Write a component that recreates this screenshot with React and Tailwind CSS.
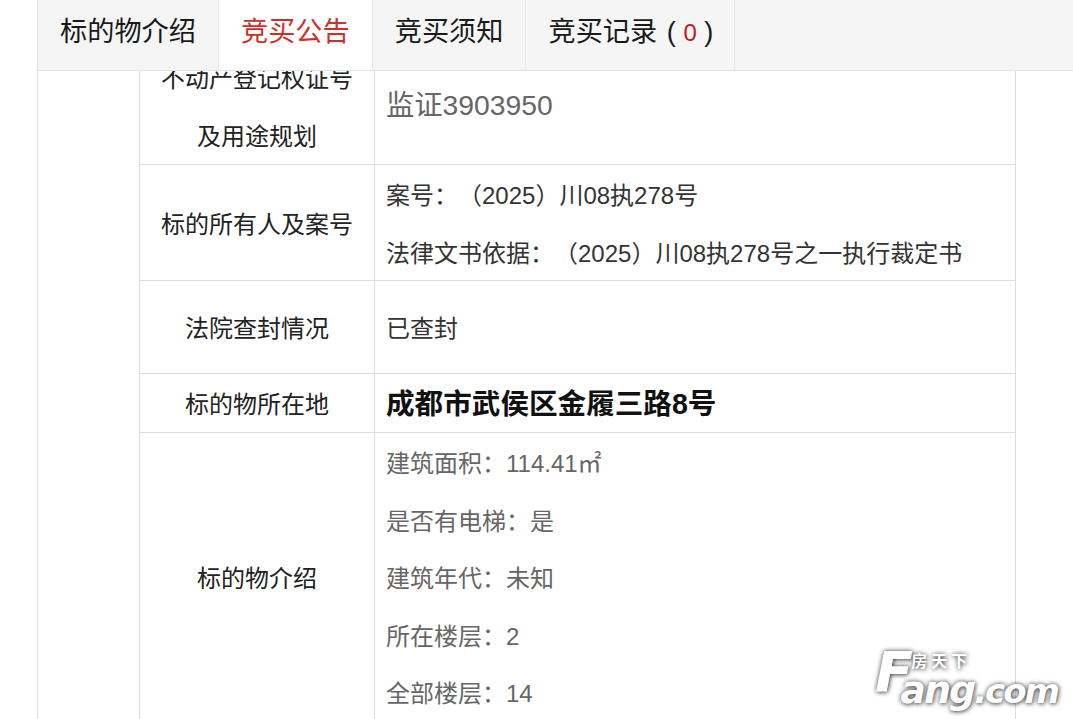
import React from 'react';

const fontStack = 'font-["Liberation_Sans","Noto_Sans_CJK_SC",sans-serif]';

const tabs = [
  { label: '标的物介绍' },
  { label: '竞买公告', active: true },
  { label: '竞买须知' },
];

const details = ['建筑面积：114.41㎡', '是否有电梯：是', '建筑年代：未知', '所在楼层：2', '全部楼层：14'];

const FangLogo = () => (
  <div className='absolute left-[875px] top-[648px] flex h-[62px] items-start font-["DejaVu_Sans",sans-serif] font-bold italic text-white [text-shadow:0_0_5px_rgba(0,0,0,0.6),1px_1px_4px_rgba(0,0,0,0.45)]'>
    <span className="mt-[-7px] text-[56px] leading-[62px] tracking-[-13px]">F</span>
    <div className="flex flex-col">
      <span className="ml-[11px] mt-[3px] h-[19px] font-['Noto_Sans_CJK_SC',sans-serif] text-[16px] not-italic leading-[19px] tracking-[4px]">房天下</span>
      <div className="flex h-[40px] items-baseline leading-[40px]">
        <span className="text-[38px] tracking-[-2px]">ang</span>
        <span className="text-[34px] tracking-[-2px]">.com</span>
      </div>
    </div>
  </div>
);

const Cell = ({ className = '', shift = 'translate-y-[2px]', children }) => (
  <td className={`border border-[#dedede] ${className}`}>
    <div className={shift}>{children}</div>
  </td>
);

const App = () => {
  return (
    <div className={`relative flex h-[719px] flex-col overflow-hidden bg-white ${fontStack}`}>
      <div className="ml-[37px] flex h-[71px] shrink-0 border-b border-l border-[#e3e3e3] bg-[#f5f5f5] text-[27.2px] leading-[64px] text-[#1a1a1a]">
        {tabs.map(tab => (
          <div
            key={tab.label}
            className={`h-[70px] border-r border-[#e8e8e8] px-[22px] ${tab.active ? 'bg-white text-[#c8322c]' : ''}`}
          >
            {tab.label}
          </div>
        ))}
        <div className="h-[70px] whitespace-pre border-r border-[#e8e8e8] pl-[22px] pr-[21px]">
          竞买记录<span className="ml-[2px]"> ( </span><span className="text-[24px] text-[#b5201f]">0</span><span> )</span>
        </div>
      </div>

      <div className="ml-[37px] min-h-0 flex-1 overflow-hidden border-l border-[#e3e3e3]">
        <table className="mt-[-23px] ml-[101px] w-[877px] table-fixed border-collapse text-[24px] leading-[57.5px] text-[#222] [text-spacing-trim:space-all]">
          <colgroup>
            <col className="w-[235px]" />
            <col />
          </colgroup>
          <tbody>
            <tr className="h-[116px]">
              <Cell className="text-center" shift="translate-y-px">不动产登记权证号<br />及用途规划</Cell>
              <Cell className="px-[11px] text-[28.3px] text-[#666]" shift="-translate-y-px">监证3903950</Cell>
            </tr>
            <tr className="h-[116px]">
              <Cell className="text-center">标的所有人及案号</Cell>
              <Cell className="px-[11px] text-[#333]">
                案号：（2025）川08执278号<br />
                法律文书依据：（2025）川08执278号之一执行裁定书
              </Cell>
            </tr>
            <tr className="h-[93px]">
              <Cell className="text-center">法院查封情况</Cell>
              <Cell className="px-[11px] text-[#333]">已查封</Cell>
            </tr>
            <tr className="h-[59px]">
              <Cell className="text-center">标的物所在地</Cell>
              <Cell className="px-[11px] text-[28.6px] font-bold text-[#111]">成都市武侯区金履三路8号</Cell>
            </tr>
            <tr>
              <Cell className="text-center">标的物介绍</Cell>
              <Cell className="px-[11px] text-[#666]">
                {details.map(line => (
                  <div key={line}>{line}</div>
                ))}
              </Cell>
            </tr>
          </tbody>
        </table>
      </div>

      <FangLogo />
    </div>
  );
};

export default App;
